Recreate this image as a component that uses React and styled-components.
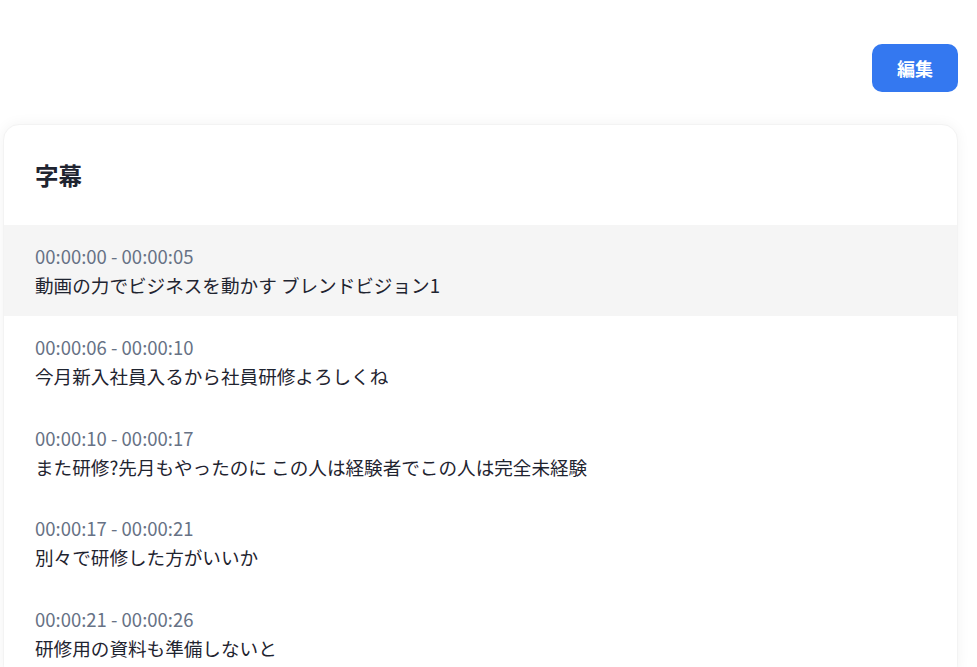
import React from "react";
import styled, { createGlobalStyle } from "styled-components";

const Global = createGlobalStyle`
  html, body { margin: 0; padding: 0; background: #ffffff; }
  body { font-family: "Noto Sans CJK JP", "Noto Sans", sans-serif; overflow: hidden; }
`;

const Page = styled.div`
  display: flex;
  flex-direction: column;
  gap: 32px;
  padding: 44px 19px 0 3px;
`;

const Toolbar = styled.div`
  display: flex;
  justify-content: flex-end;
`;

const EditButton = styled.button`
  width: 86px;
  height: 48px;
  border: none;
  border-radius: 10px;
  background: #3478f0;
  color: #ffffff;
  font-family: inherit;
  font-size: 18px;
  font-weight: 700;
  cursor: pointer;
`;

const Card = styled.section`
  background: #ffffff;
  border-radius: 16px;
  box-shadow: 0 0 14px rgba(0, 0, 0, 0.05);
  border: 1px solid #f3f3f3;
  overflow: hidden;
`;

const CardHeader = styled.h2`
  margin: 0;
  height: 100px;
  display: flex;
  align-items: center;
  padding: 0 31px 0;
  box-sizing: border-box;
  font-size: 23.5px;
  font-weight: 700;
  color: #1f2430;
`;

const Row = styled.div`
  display: flex;
  flex-direction: column;
  padding: 17px 31px 16.75px;
  background: ${(p) => (p.$active ? "#f5f5f5" : "#ffffff")};
`;

const Time = styled.div`
  font-size: 18.5px;
  line-height: 29px;
  color: #677285;
`;

const Text = styled.div`
  font-size: 18.6px;
  line-height: 28px;
  color: #1f2430;
`;

const subtitles = [
  { time: "00:00:00 - 00:00:05", text: "動画の力でビジネスを動かす ブレンドビジョン1" },
  { time: "00:00:06 - 00:00:10", text: "今月新入社員入るから社員研修よろしくね" },
  { time: "00:00:10 - 00:00:17", text: "また研修?先月もやったのに この人は経験者でこの人は完全未経験" },
  { time: "00:00:17 - 00:00:21", text: "別々で研修した方がいいか" },
  { time: "00:00:21 - 00:00:26", text: "研修用の資料も準備しないと" },
];

export default function App() {
  return (
    <>
      <Global />
      <Page>
        <Toolbar>
          <EditButton>編集</EditButton>
        </Toolbar>
        <Card>
          <CardHeader>字幕</CardHeader>
          {subtitles.map((s, i) => (
            <Row key={i} $active={i === 0}>
              <Time>{s.time}</Time>
              <Text>{s.text}</Text>
            </Row>
          ))}
        </Card>
      </Page>
    </>
  );
}
